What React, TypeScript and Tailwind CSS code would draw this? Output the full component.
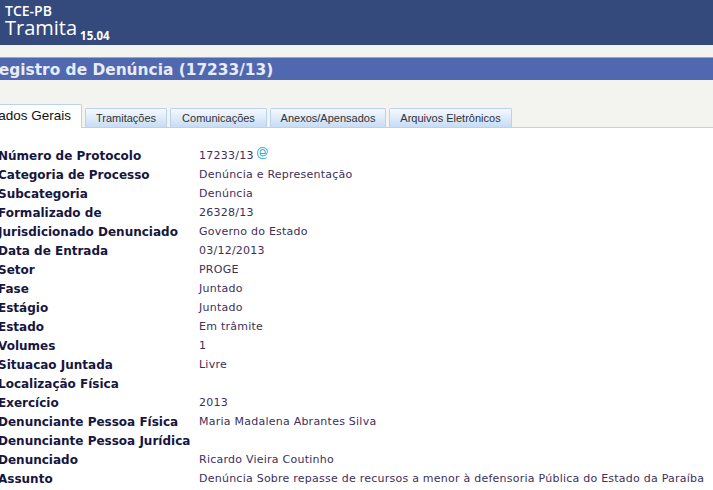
const rows: [string, string][] = [
  ["Número de Protocolo", "17233/13"],
  ["Categoria de Processo", "Denúncia e Representação"],
  ["Subcategoria", "Denúncia"],
  ["Formalizado de", "26328/13"],
  ["Jurisdicionado Denunciado", "Governo do Estado"],
  ["Data de Entrada", "03/12/2013"],
  ["Setor", "PROGE"],
  ["Fase", "Juntado"],
  ["Estágio", "Juntado"],
  ["Estado", "Em trâmite"],
  ["Volumes", "1"],
  ["Situacao Juntada", "Livre"],
  ["Localização Física", ""],
  ["Exercício", "2013"],
  ["Denunciante Pessoa Física", "Maria Madalena Abrantes Silva"],
  ["Denunciante Pessoa Jurídica", ""],
  ["Denunciado", "Ricardo Vieira Coutinho"],
  ["Assunto", "Denúncia Sobre repasse de recursos a menor à defensoria Pública do Estado da Paraíba"],
];

const tabs = [
  { label: "Tramitações", width: "w-[82px]" },
  { label: "Comunicações", width: "w-[97px]" },
  { label: "Anexos/Apensados", width: "w-[116px]" },
  { label: "Arquivos Eletrônicos", width: "w-[123px]" },
];

export default function App() {
  return (
    <div className="h-[490px] w-[713px] overflow-hidden bg-white font-['DejaVu_Sans',sans-serif]">
      <div className="h-[45px] bg-[#34497c] pl-[5px] pt-[3px] font-['Open_Sans',sans-serif] text-white">
        <div className="text-[14px] font-semibold leading-[16px]">TCE-PB</div>
        <div className="flex items-start leading-[18px]">
          <span className="text-[20px] font-medium leading-[18px]">Tramita</span>
          <span className="ml-[3px] mt-[10px] text-[11.5px] font-bold leading-[13px]">15.04</span>
        </div>
      </div>

      <div className="h-[83px] bg-[#f3f3f0] pt-[12px]">
        <div className="-ml-[13px] h-[23px] whitespace-nowrap border-t border-[#9aa8cc] bg-[#5068b0] text-[15.4px] font-bold leading-[24px] text-[#e8ecf6]">
          Registro de Denúncia (17233/13)
        </div>
        <div className="mt-[24px] flex h-[24px] items-end gap-[3px] border-b border-[#bcd2ea] font-['Liberation_Sans',sans-serif]">
          <div className="-mb-px -ml-[12px] flex h-[24px] w-[94px] shrink-0 items-center justify-end whitespace-nowrap rounded-t-[2px] border border-b-0 border-[#bcd2ea] bg-white pr-[10px] text-[13.5px] text-[#111]">
            Dados Gerais
          </div>
          {tabs.map((t) => (
            <div
              key={t.label}
              className={`${t.width} flex h-[19px] shrink-0 items-center justify-center whitespace-nowrap rounded-t-[2px] border border-b-0 border-[#bcd2ea] bg-gradient-to-b from-[#f6f9fd] to-[#c6dcf5] text-[11px] text-[#333]`}
            >
              {t.label}
            </div>
          ))}
        </div>
      </div>

      <div className="-ml-[2px] pt-[18px]">
        {rows.map(([label, value], i) => (
          <div key={label} className="flex h-[19px] items-center whitespace-nowrap">
            <div className="w-[201px] shrink-0 text-[12px] font-bold text-[#16163f]">{label}</div>
            <div className="flex items-center pt-[1px] text-[11px] tracking-[0.24px] text-[#3c2f5c]">
              {value}
              {i === 0 && (
                <svg viewBox="0 0 14 14" className="mb-[6px] ml-[2px] h-[14px] w-[13px]" fill="none" stroke="#3fb0d4" strokeWidth="1.1">
                  <path d="M4.500 7.500h5.500C10.300 5 9 3.300 7.200 3.300 5.500 3.300 4.300 5 4.500 7.200c.2 2.300 2 3.300 3.800 2.800 4-1 4.500-4.500 3.500-6.500C10.800 1.500 9 .9 7 1 3.500 1.200 1.500 4 1.700 7.500c.2 3.300 2.500 5.500 5.800 5.500 1.500 0 2.800-.3 4-1" />
                </svg>
              )}
            </div>
          </div>
        ))}
      </div>
    </div>
  );
}
